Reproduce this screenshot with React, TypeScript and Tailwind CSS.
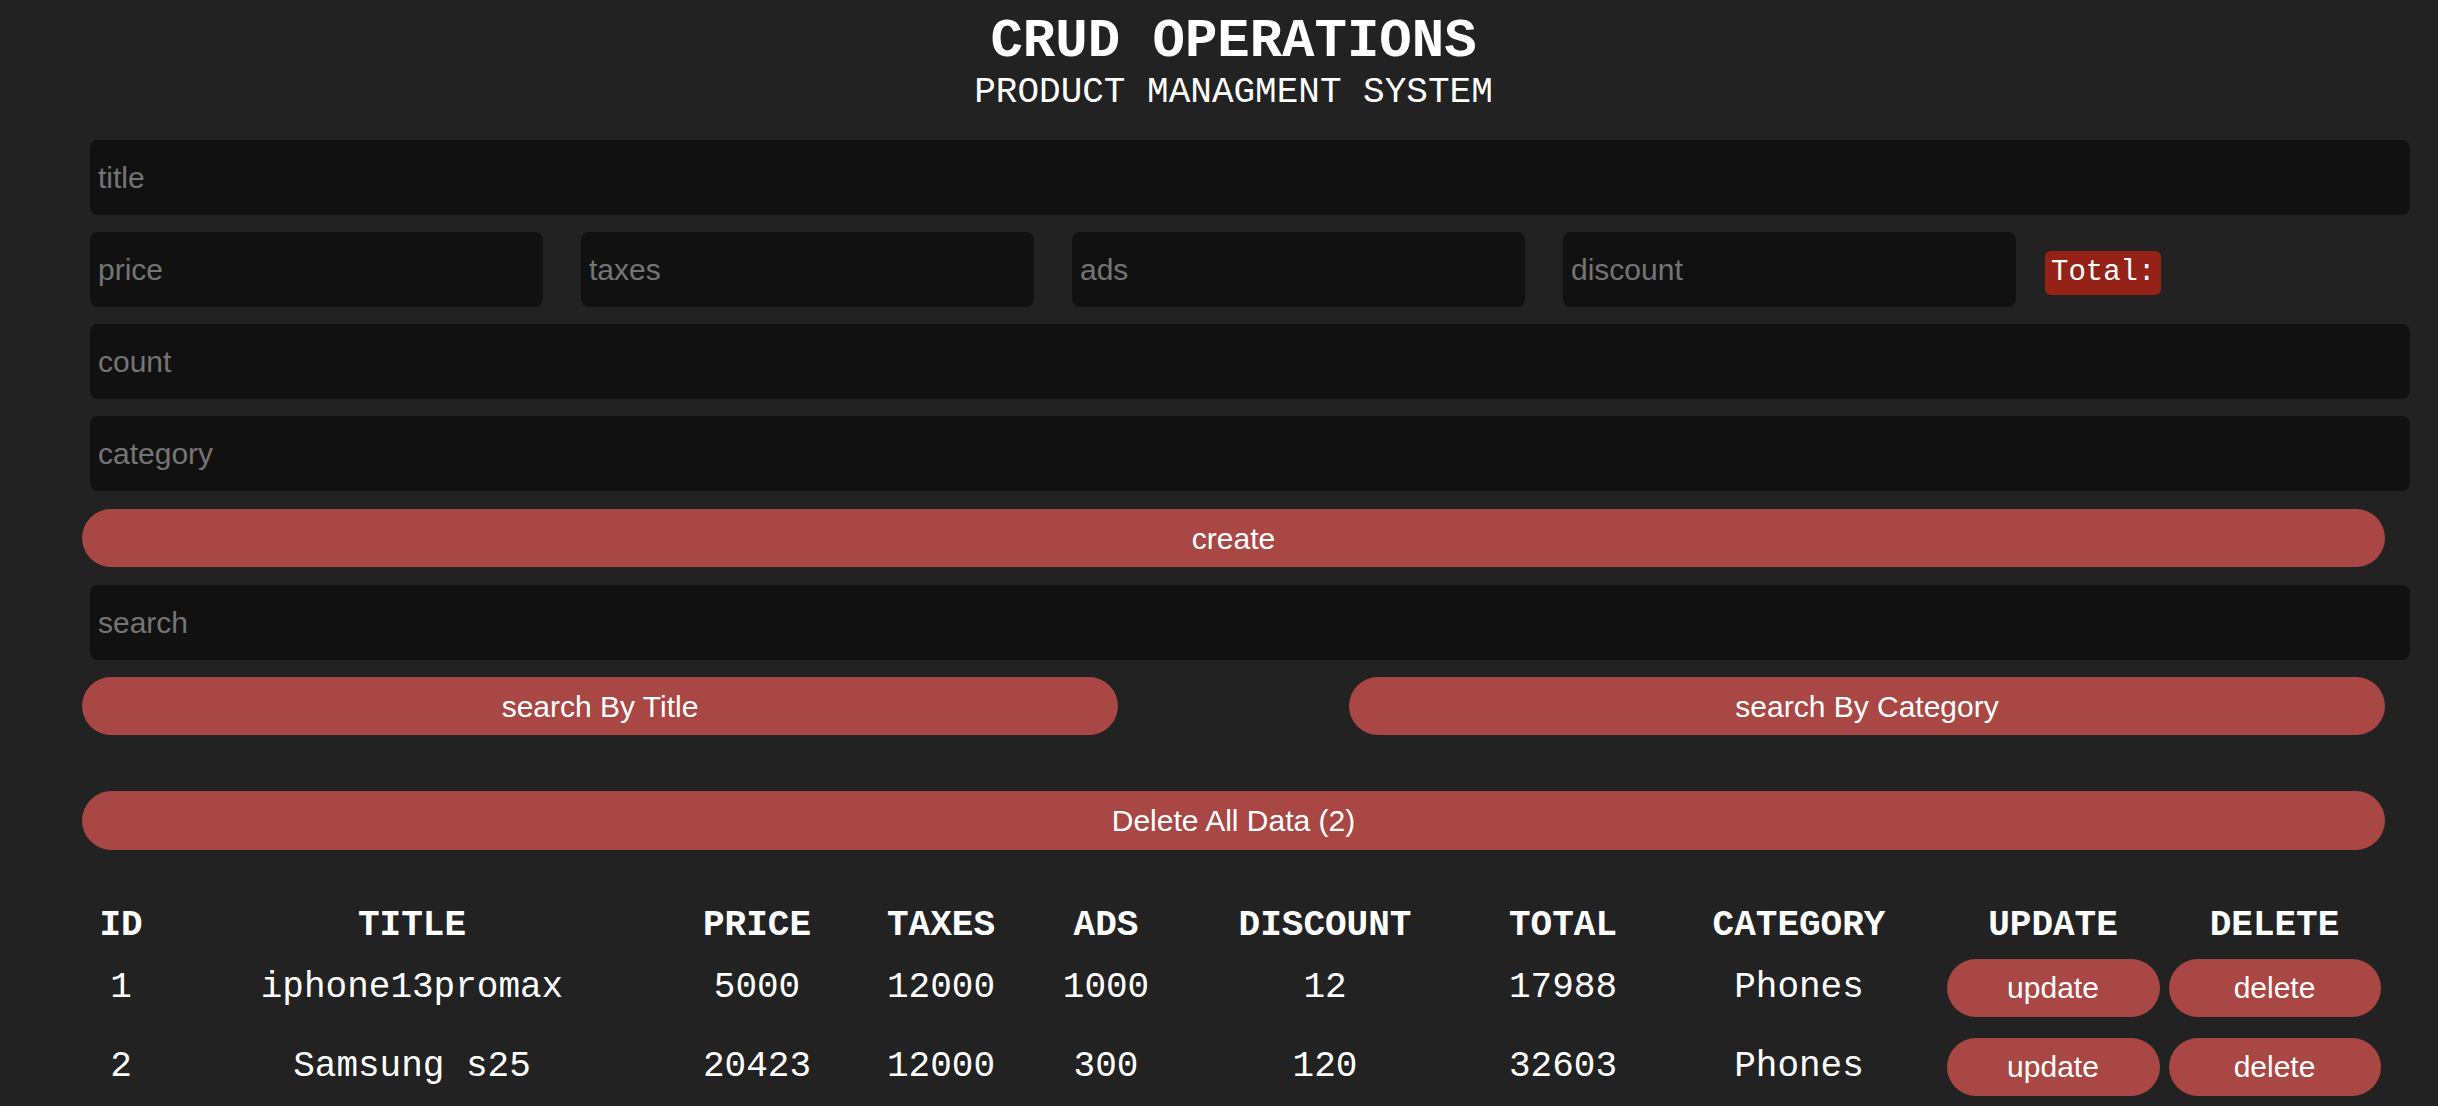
const products = [
  { id: 1, title: 'iphone13promax', price: 5000, taxes: 12000, ads: 1000, discount: 12, total: 17988, category: 'Phones' },
  { id: 2, title: 'Samsung s25', price: 20423, taxes: 12000, ads: 300, discount: 120, total: 32603, category: 'Phones' },
];

const fieldCls =
  'h-[75px] rounded-lg bg-[#111111] px-2 text-[30px] text-white outline-none placeholder:text-[#757575]';
const inputCls = `block ml-2 w-[2320px] ${fieldCls}`;
const btnCls =
  'block h-[58px] rounded-full bg-[#a94745] text-[30px] text-white font-["Liberation_Sans",Arial,sans-serif]';

function App() {
  return (
    <div className="min-h-screen bg-[#222222] text-white font-['Liberation_Sans',Arial,sans-serif]">
      <div className="ml-[82px] w-[2303px] pt-[15px] pb-8">
        <div className="text-center font-['Liberation_Mono','Courier_New',monospace]">
          <h1 className="text-[54px] leading-[54px] font-bold">CRUD OPERATIONS</h1>
          <p className="mt-[6px] text-[36px] leading-[36px]">PRODUCT MANAGMENT SYSTEM</p>
        </div>

        <div className="mt-[29px] flex flex-col">
          <input className={inputCls} placeholder="title" />

          <div className="mt-[17px] ml-2 flex items-center gap-[38px]">
            <input className={`w-[453px] ${fieldCls}`} placeholder="price" />
            <input className={`w-[453px] ${fieldCls}`} placeholder="taxes" />
            <input className={`w-[453px] ${fieldCls}`} placeholder="ads" />
            <input className={`w-[453px] ${fieldCls}`} placeholder="discount" />
            <small className="-ml-[9px] mt-[6px] flex h-[44px] items-center rounded-md bg-[#952216] px-[6px] font-['Liberation_Mono','Courier_New',monospace] text-[29px]">
              Total:
            </small>
          </div>

          <input className={`${inputCls} mt-[17px]`} placeholder="count" />
          <input className={`${inputCls} mt-[17px]`} placeholder="category" />

          <button className={`${btnCls} mt-[18px] w-full`}>create</button>

          <input className={`${inputCls} mt-[18px]`} placeholder="search" />

          <div className="mt-[17px] flex justify-between">
            <button className={`${btnCls} w-[1036px]`}>search By Title</button>
            <button className={`${btnCls} w-[1036px]`}>search By Category</button>
          </div>

          <button className={`${btnCls} mt-[56px] h-[59px] w-full`}>Delete All Data (2)</button>
        </div>

        <table className="mt-[53px] w-full table-fixed text-center font-['Liberation_Mono','Courier_New',monospace] text-[36px] leading-[36px]">
          <colgroup>
            <col className="w-[78px]" />
            <col className="w-[504px]" />
            <col className="w-[186px]" />
            <col className="w-[182px]" />
            <col className="w-[148px]" />
            <col className="w-[290px]" />
            <col className="w-[186px]" />
            <col className="w-[286px]" />
            <col className="w-[222px]" />
            <col className="w-[221px]" />
          </colgroup>
          <thead>
            <tr className="h-[45px] font-bold">
              <th>ID</th>
              <th>TITLE</th>
              <th>PRICE</th>
              <th>TAXES</th>
              <th>ADS</th>
              <th>DISCOUNT</th>
              <th>TOTAL</th>
              <th>CATEGORY</th>
              <th>UPDATE</th>
              <th>DELETE</th>
            </tr>
          </thead>
          <tbody>
            {products.map((p) => (
              <tr key={p.id} className="h-[79px]">
                <td>{p.id}</td>
                <td>{p.title}</td>
                <td>{p.price}</td>
                <td>{p.taxes}</td>
                <td>{p.ads}</td>
                <td>{p.discount}</td>
                <td>{p.total}</td>
                <td>{p.category}</td>
                <td>
                  <button className={`${btnCls} mx-auto h-[57px] w-[213px]`}>update</button>
                </td>
                <td>
                  <button className={`${btnCls} mx-auto h-[57px] w-[212px]`}>delete</button>
                </td>
              </tr>
            ))}
          </tbody>
        </table>
      </div>
    </div>
  );
}

export default App;
